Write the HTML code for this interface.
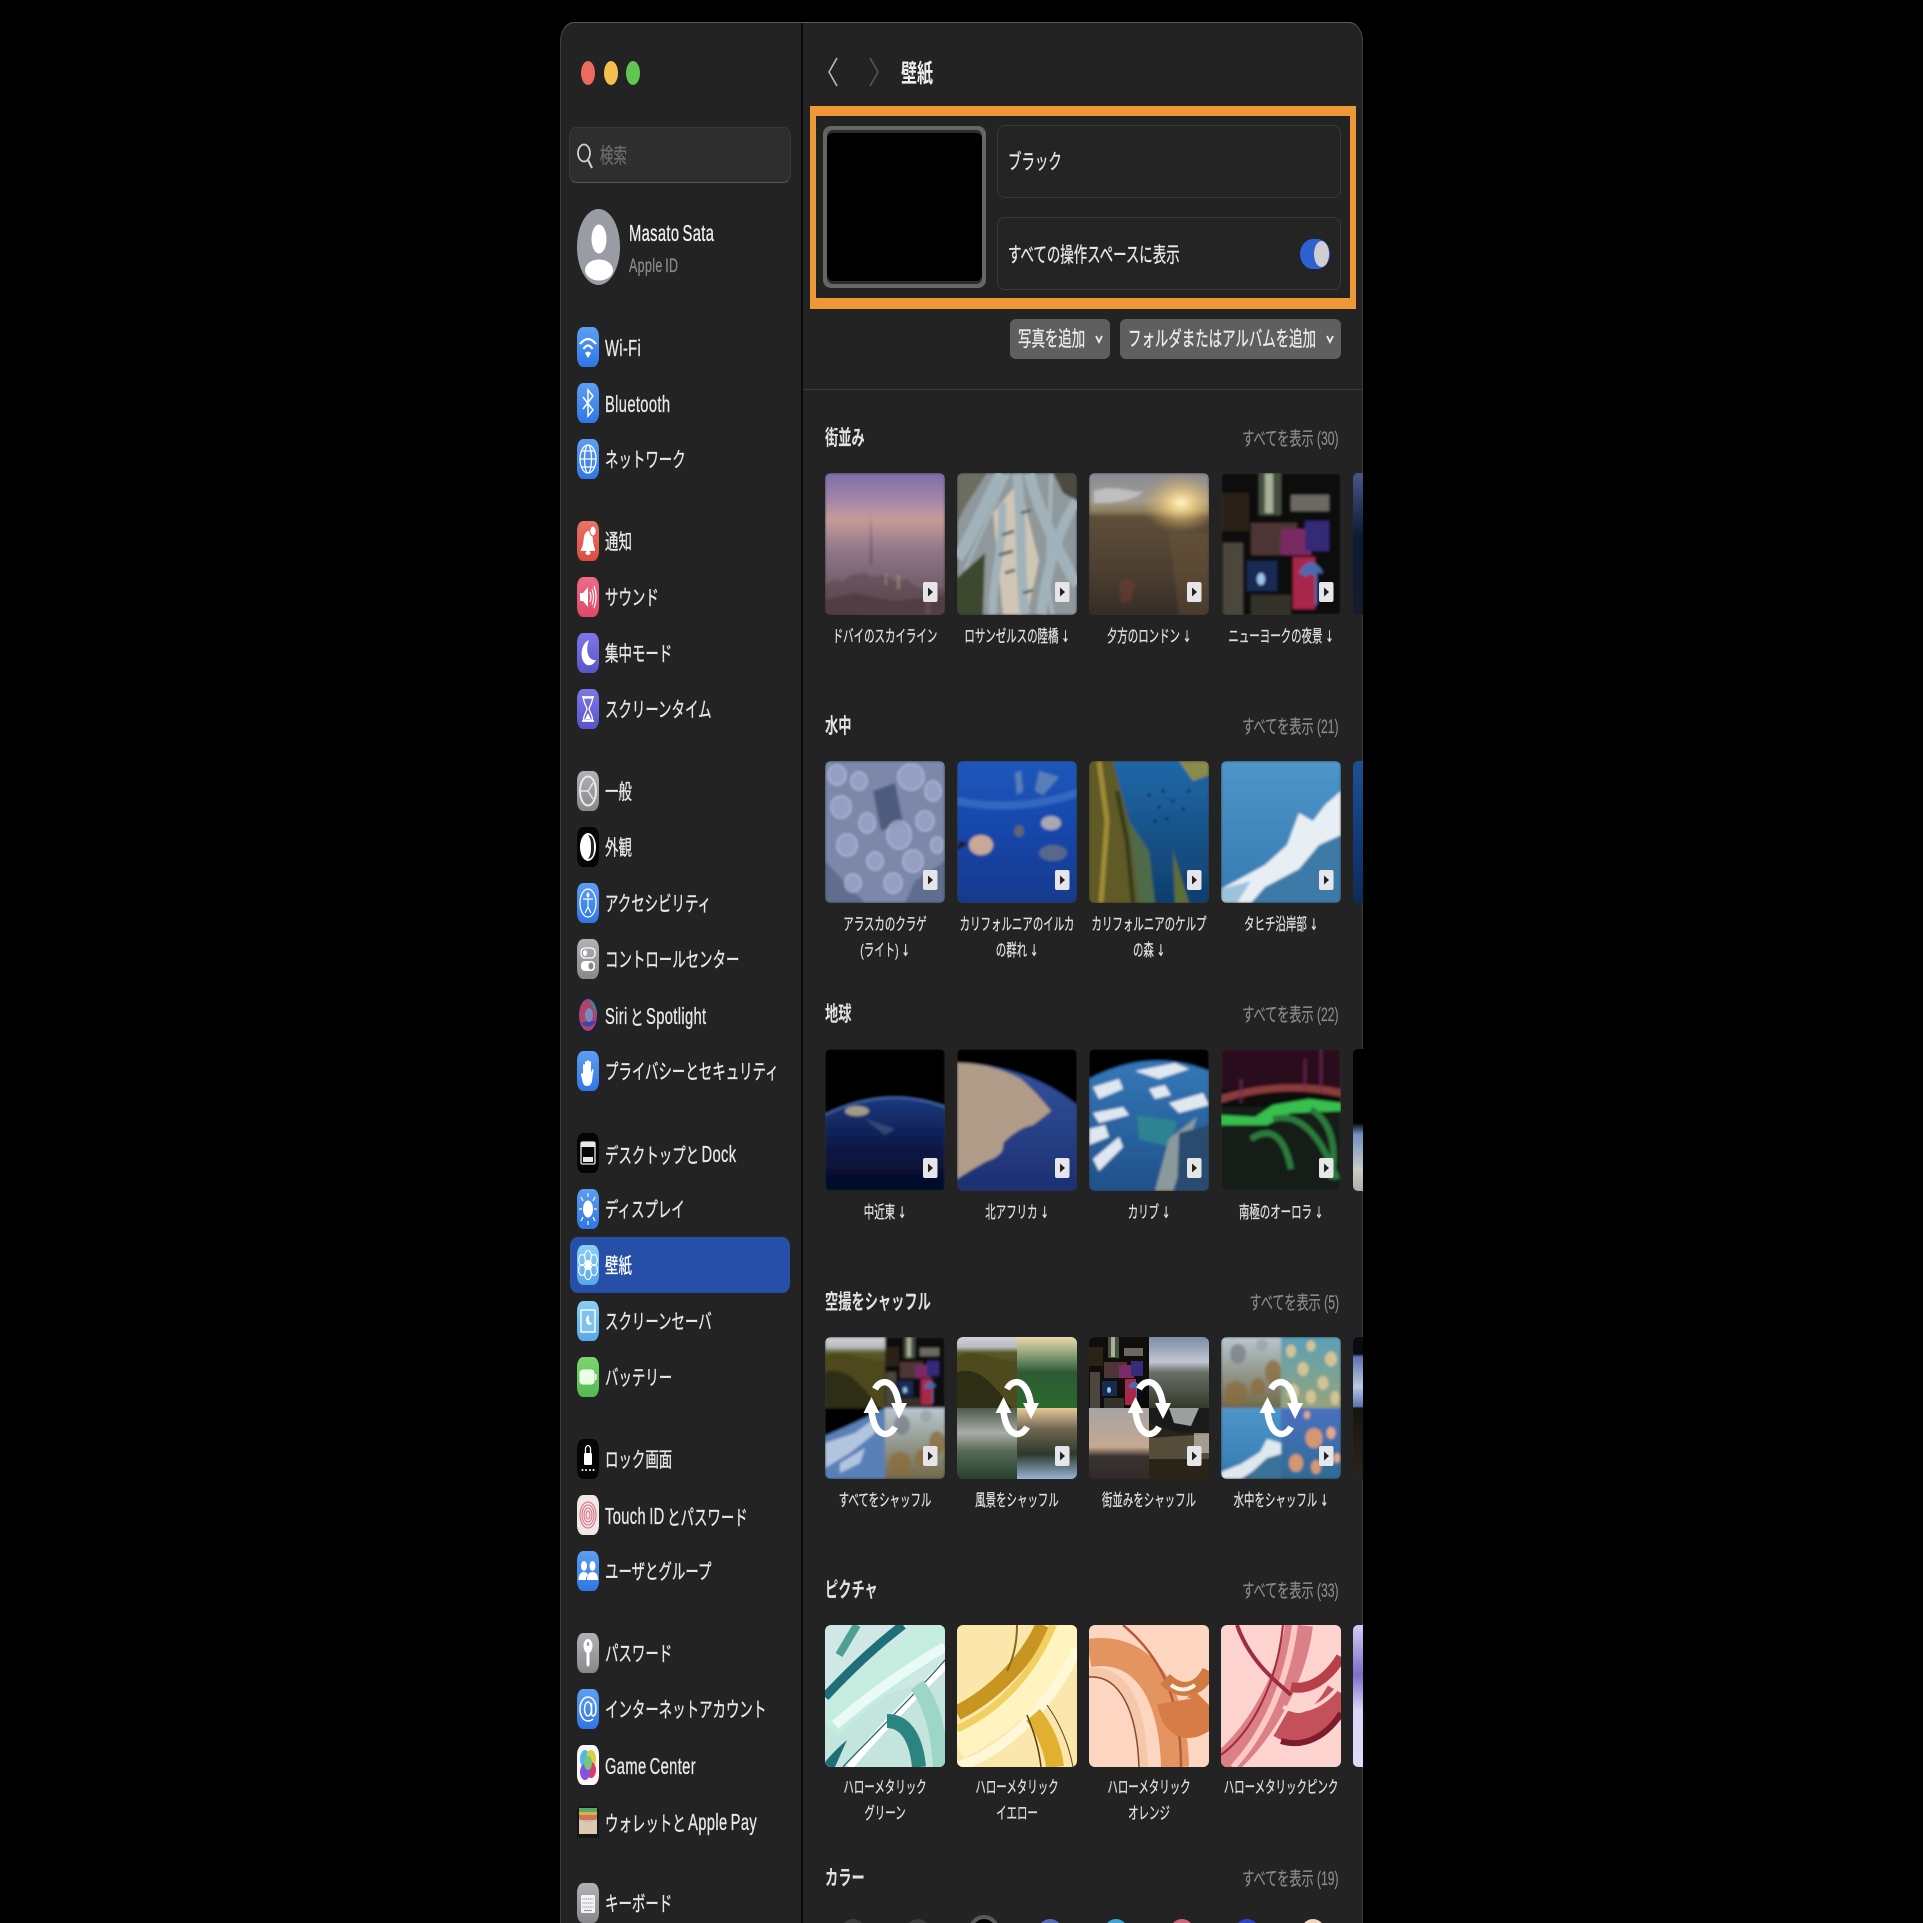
<!DOCTYPE html>
<html lang="ja"><head><meta charset="utf-8"><title>壁紙</title>
<style>
html,body{margin:0;padding:0;background:#000}
#r{position:relative;width:1923px;height:1923px;overflow:hidden;background:#000;font-family:"Liberation Sans","Noto Sans CJK JP",sans-serif;color:#e8e8e8}
#w{position:absolute;left:560px;top:22px;width:803px;height:1920px;background:#232323;border-radius:14px 14px 0 0/20px 20px 0 0;box-shadow:inset 0 1px 0 #5c5c5c,inset 1px 0 0 #3c3c3c,inset -1px 0 0 #3c3c3c}
.a{position:absolute}
.t{position:absolute;white-space:nowrap;font-size:21px;line-height:30px;word-spacing:-2px;transform-origin:0 50%;transform:scaleX(.64);-webkit-text-stroke:.3px currentColor}
.l{font-size:23px;letter-spacing:.55px;position:relative;top:-1px}
.c{position:absolute;white-space:nowrap;font-size:17px;line-height:24px;color:#e0e0e0;transform:translateX(-50%) scaleX(.615);-webkit-text-stroke:.25px currentColor}
.d{font-family:"DejaVu Sans",sans-serif;font-size:16px}
.h{position:absolute;left:825px;white-space:nowrap;font-size:21px;line-height:30px;font-weight:700;color:#e2e2e2;transform-origin:0 50%;transform:scaleX(.63)}
.s{position:absolute;right:584px;white-space:nowrap;font-size:19px;line-height:24px;color:#8a8a8a;transform-origin:100% 50%;transform:scaleX(.64);-webkit-text-stroke:.2px currentColor}
.i{position:absolute;left:577px;width:22px;height:40px}
.th{position:absolute;width:120px;height:142px;border-radius:6px;overflow:hidden;background:#333}
.th svg{display:block;width:120px;height:142px}
.sl{position:absolute;left:1353px;width:10px;height:142px;border-radius:5px 0 0 5px}
.card{position:absolute;left:997px;width:342px;height:71px;border:1px solid #3a3a3a;border-radius:8px;background:#242424}
.btn{position:absolute;top:319px;height:40px;background:#5f5f5f;border-radius:6px}
.dot{position:absolute;top:1919px;width:26px;height:30px;border-radius:50%}
</style></head><body>
<div id="r">
<svg width="0" height="0" style="position:absolute"><defs>
<filter id="bf" x="-5%" y="-5%" width="110%" height="110%"><feGaussianBlur stdDeviation="1.300"/></filter>
<linearGradient id="gb" x2="0" y2="1"><stop offset="0" stop-color="#5d9ff3"/><stop offset="1" stop-color="#2f77e6"/></linearGradient>
<linearGradient id="gr" x2="0" y2="1"><stop offset="0" stop-color="#ea7468"/><stop offset="1" stop-color="#de4c3e"/></linearGradient>
<linearGradient id="gp" x2="0" y2="1"><stop offset="0" stop-color="#ec6c8a"/><stop offset="1" stop-color="#e04868"/></linearGradient>
<linearGradient id="gv" x2="0" y2="1"><stop offset="0" stop-color="#7d78e8"/><stop offset="1" stop-color="#5855cc"/></linearGradient>
<linearGradient id="gg" x2="0" y2="1"><stop offset="0" stop-color="#b2b2b6"/><stop offset="1" stop-color="#88888c"/></linearGradient>
<linearGradient id="gl" x2="0" y2="1"><stop offset="0" stop-color="#8cd0f5"/><stop offset="1" stop-color="#55a8e8"/></linearGradient>
<linearGradient id="gn" x2="0" y2="1"><stop offset="0" stop-color="#7cd672"/><stop offset="1" stop-color="#55b850"/></linearGradient>
<linearGradient id="dub" x2="0" y2="1"><stop offset="0" stop-color="#7a6ea8"/><stop offset=".2" stop-color="#a688a6"/><stop offset=".33" stop-color="#c79a98"/><stop offset=".55" stop-color="#8f7688"/><stop offset=".78" stop-color="#75606c"/><stop offset="1" stop-color="#5a4650"/></linearGradient>
<linearGradient id="lon" x2="0" y2="1"><stop offset="0" stop-color="#8b8b95"/><stop offset=".2" stop-color="#a09a90"/><stop offset=".27" stop-color="#8e7e5c"/><stop offset=".31" stop-color="#5e4e3a"/><stop offset=".7" stop-color="#4c3e30"/><stop offset="1" stop-color="#362c26"/></linearGradient>
<radialGradient id="sun" cx=".5" cy=".5" r=".5"><stop offset="0" stop-color="#fff6c8"/><stop offset=".3" stop-color="#f2d48a" stop-opacity=".85"/><stop offset="1" stop-color="#c9a050" stop-opacity="0"/></radialGradient>
<linearGradient id="dol" x2="0" y2="1"><stop offset="0" stop-color="#1f58bc"/><stop offset=".5" stop-color="#1546aa"/><stop offset="1" stop-color="#123a8c"/></linearGradient>
<linearGradient id="kel" x2="0" y2="1"><stop offset="0" stop-color="#2068a8"/><stop offset="1" stop-color="#0e3e6c"/></linearGradient>
<linearGradient id="tah" x2="0" y2="1"><stop offset="0" stop-color="#4e95c9"/><stop offset="1" stop-color="#347bb0"/></linearGradient>
<linearGradient id="mid" x2="0" y2="1"><stop offset="0" stop-color="#1c3a80"/><stop offset=".5" stop-color="#0b1a4a"/><stop offset="1" stop-color="#040a24"/></linearGradient>
<linearGradient id="afr" x2="0" y2="1"><stop offset="0" stop-color="#33549c"/><stop offset="1" stop-color="#1c2f72"/></linearGradient>
<linearGradient id="car" x2="0" y2="1"><stop offset="0" stop-color="#3478b8"/><stop offset="1" stop-color="#20508a"/></linearGradient>
<linearGradient id="hil" x2="0" y2="1"><stop offset="0" stop-color="#d0d2d6"/><stop offset=".14" stop-color="#b8bcc0"/><stop offset=".22" stop-color="#5a5a28"/><stop offset="1" stop-color="#24240f"/></linearGradient>
<linearGradient id="val" x2="0" y2="1"><stop offset="0" stop-color="#ead8a8"/><stop offset=".25" stop-color="#8aa07a"/><stop offset=".5" stop-color="#2e5a34"/><stop offset="1" stop-color="#2a6a2c"/></linearGradient>
<linearGradient id="fog" x2="0" y2="1"><stop offset="0" stop-color="#4c5a4c"/><stop offset=".35" stop-color="#a8aca8"/><stop offset=".6" stop-color="#5a6a58"/><stop offset="1" stop-color="#24402c"/></linearGradient>
<linearGradient id="riv" x2="0" y2="1"><stop offset="0" stop-color="#e8c898"/><stop offset=".3" stop-color="#6e6652"/><stop offset=".65" stop-color="#2c3a2a"/><stop offset="1" stop-color="#9ab4d8"/></linearGradient>
<linearGradient id="nyc" x2="0" y2="1"><stop offset="0" stop-color="#7e8ca8"/><stop offset=".35" stop-color="#c0c6d0"/><stop offset=".5" stop-color="#6a6e68"/><stop offset="1" stop-color="#323a28"/></linearGradient>
<linearGradient id="dus" x2="0" y2="1"><stop offset="0" stop-color="#a8a4a4"/><stop offset=".55" stop-color="#c4a890"/><stop offset=".68" stop-color="#3a3430"/><stop offset="1" stop-color="#302a2a"/></linearGradient>
<linearGradient id="jyl" x2="0" y2="1"><stop offset="0" stop-color="#b8c8d0"/><stop offset="1" stop-color="#706848"/></linearGradient>
<linearGradient id="jgo" x2="0" y2="1"><stop offset="0" stop-color="#5aa0b8"/><stop offset="1" stop-color="#98a478"/></linearGradient>
<linearGradient id="jbl" x2="0" y2="1"><stop offset="0" stop-color="#4a70c0"/><stop offset="1" stop-color="#2e6c94"/></linearGradient>
<g id="badge"><rect x="98" y="109" width="14.500" height="20" rx="2" fill="#e6e6ea"/><path d="M103 114.500v9l5-4.500z" fill="#222"/></g>
<g id="rf"><g fill="none" stroke="#fff" stroke-width="6.500"><path d="M50 52C56 41 70 41 74 68"/><path d="M70 90C64 101 50 101 46.500 75"/></g><path d="M66 66h16l-8 16zM38.500 76h16l-8-16z" fill="#fff"/></g>
<g id="dubai"><rect width="120" height="142" fill="url(#dub)"/><path d="M46 42l1.500 50h-3z" fill="#6e5874"/><path d="M0 142V112l8-6 10 2 8-6 14-2 6 4 14-2 10 6 12-2 12 10 14-4 12 6v26z" fill="#5c4850" opacity=".6"/><path d="M60 100v12h2v-12zM72 102v14h3v-14zM100 112h6v30h-6z" fill="#a08a78" opacity=".7"/><path d="M0 126l30-6 40 8 50-6v20H0z" fill="#4d3a40" opacity=".75"/></g>
<g id="la"><rect width="120" height="142" fill="#8f989a"/><path d="M36 40L62 8l20 80-12 54H46z" fill="#d0c6b4"/><path d="M0 105L28 80 26 142H0z" fill="#3e4a2e"/><path d="M96 0h24v28l-14-8z" fill="#4e4c40"/><path d="M0 0h30L8 34 0 50z" fill="#6c6e60"/><g fill="none" stroke="#a2b2ba"><path d="M0 85C20 55 30 25 45 0" stroke-width="12"/><path d="M8 96C24 62 38 30 52 0" stroke-width="3"/><path d="M45 30C48 70 34 110 36 142" stroke-width="8"/><path d="M60 0C66 50 62 100 68 142" stroke-width="10"/><path d="M72 0C82 40 102 80 120 112" stroke-width="11"/><path d="M84 142C90 92 104 50 120 28" stroke-width="10"/><path d="M94 0C94 60 86 100 96 142" stroke-width="4"/></g><path d="M45 62l12-4M42 82l14-4M48 100l10-3M64 40l10-3M66 120l10-3" stroke="#5c666a" stroke-width="3"/></g>
<g id="london"><rect width="120" height="142" fill="url(#lon)"/><path d="M5 18C30 10 45 22 55 18 42 30 18 30 5 30z" fill="#c8c8cc" opacity=".8"/><ellipse cx="92" cy="30" rx="40" ry="30" fill="url(#sun)"/><path d="M30 110c8-6 14-4 16 2l-4 16-10 2z" fill="#6a3c32" opacity=".7"/><path d="M80 60L120 60 120 142 90 142z" fill="#7a6040" opacity=".3"/></g>
<g id="ny"><rect width="120" height="142" fill="#100d0c"/><rect x="38" y="0" width="22" height="42" fill="#45503e"/><rect x="44" y="0" width="8" height="40" fill="#a8b098"/><rect x="0" y="20" width="28" height="38" fill="#2c2218"/><rect x="70" y="22" width="38" height="16" fill="#6a6a62"/><rect x="30" y="50" width="46" height="32" fill="#4e3434"/><rect x="60" y="56" width="30" height="26" fill="#7a2a64"/><rect x="84" y="48" width="24" height="30" fill="#342c78"/><rect x="2" y="70" width="20" height="72" fill="#4c463e"/><rect x="26" y="88" width="30" height="30" fill="#162a52"/><ellipse cx="40" cy="106" rx="4" ry="6" fill="#9cc8e8"/><rect x="72" y="84" width="22" height="52" fill="#a82848"/><path d="M78 100c6-14 18-14 24 0v32h-8V104c-2-4-6-4-8 0z" fill="#4a6ab0"/><rect x="96" y="100" width="24" height="42" fill="#0a0a0a"/><rect x="30" y="122" width="40" height="20" fill="#34322a"/></g>
<g id="jelly"><rect width="120" height="142" fill="#7b87aa"/><path d="M48 30l22-8 8 40-22 8z" fill="#3a4868" opacity=".7"/><path d="M0 100l40 42H0zM90 120l30-20v42H80z" fill="#4e5c7c" opacity=".6"/><g fill="#9ca5ca" stroke="#c4cae4" stroke-width="1.300" opacity=".8"><ellipse cx="12" cy="14" rx="9" ry="10"/><ellipse cx="34" cy="20" rx="8" ry="9"/><ellipse cx="86" cy="16" rx="13" ry="13"/><ellipse cx="108" cy="30" rx="8" ry="10"/><ellipse cx="16" cy="46" rx="10" ry="11"/><ellipse cx="42" cy="62" rx="8" ry="10"/><ellipse cx="74" cy="74" rx="12" ry="14"/><ellipse cx="100" cy="60" rx="9" ry="10"/><ellipse cx="22" cy="84" rx="10" ry="11"/><ellipse cx="50" cy="100" rx="8" ry="9"/><ellipse cx="88" cy="100" rx="10" ry="11"/><ellipse cx="68" cy="122" rx="9" ry="10"/><ellipse cx="28" cy="122" rx="8" ry="9"/><ellipse cx="112" cy="84" rx="6" ry="8"/></g></g>
<g id="dolphin"><rect width="120" height="142" fill="url(#dol)"/><path d="M58 12l6-2 2 20-6 4zM82 10l20 6-16 18-8-4z" fill="#8aa4b8" opacity=".55"/><path d="M0 36Q60 48 120 28v8Q60 56 0 44z" fill="#5a90d8" opacity=".4"/><ellipse cx="24" cy="84" rx="12" ry="10" fill="#c8a898"/><path d="M12 82L0 90l2-10z" fill="#1a1a24"/><ellipse cx="62" cy="70" rx="5" ry="6" fill="#5c6670"/><ellipse cx="94" cy="62" rx="10" ry="7" fill="#a8a8b4"/><ellipse cx="96" cy="92" rx="14" ry="8" fill="#59688a"/></g>
<g id="kelp"><rect width="120" height="142" fill="url(#kel)"/><path d="M0 0H24L40 60 54 142H0z" fill="#5e5a26"/><path d="M10 0l8 60-6 82" stroke="#a08c38" stroke-width="5" fill="none"/><path d="M28 30l10 50 6 62" stroke="#2e3a1e" stroke-width="4" fill="none"/><path d="M40 60l20 30 6 52H50z" fill="#4f6a48"/><path d="M84 90l16 52H86z" fill="#5e6e30"/><path d="M90 0h30v14l-16 6z" fill="#8a8a48"/><g fill="#0c1a2c"><circle cx="60" cy="34" r="1.500"/><circle cx="74" cy="30" r="1.500"/><circle cx="84" cy="40" r="1.500"/><circle cx="70" cy="46" r="1.500"/><circle cx="94" cy="48" r="1.500"/><circle cx="78" cy="58" r="1.500"/><circle cx="100" cy="30" r="1.500"/><circle cx="66" cy="60" r="1.500"/></g></g>
<g id="tahiti"><rect width="120" height="142" fill="url(#tah)"/><path d="M120 30L104 44 92 60 78 52 66 84 44 104 0 128v14h120z" fill="#e8eff4"/><path d="M120 74L98 84 78 108 44 126 30 142h90z" fill="#3d7aa8"/><path d="M0 128l30-8-14 22H0z" fill="#9cc2dc"/></g>
<g id="mideast"><rect width="120" height="142" fill="#000"/><path d="M0 66Q60 36 120 58V142H0z" fill="url(#mid)"/><path d="M0 66Q60 36 120 58" fill="none" stroke="#5a82c8" stroke-width="1.200"/><ellipse cx="32" cy="62" rx="12" ry="5" fill="#c4b68a" opacity=".8"/><path d="M40 70l30 10-10 6z" fill="#6a7c98" opacity=".4"/></g>
<g id="africa"><rect width="120" height="142" fill="#000"/><path d="M0 14Q70 16 120 56V142H0z" fill="url(#afr)"/><path d="M0 14Q34 14 64 30 80 44 94 62 84 70 76 76 62 78 46 94 48 106 30 112 12 122 0 130z" fill="#b09c88"/></g>
<g id="carib"><rect width="120" height="142" fill="#000"/><path d="M0 30Q60 -2 120 22V142H0z" fill="url(#car)"/><g fill="#dfe8f0"><path d="M4 38l26-8 4 10-24 10zM4 64l30-6 6 8-30 8zM46 22l40-8 14 6-30 10zM80 54l34-10 6 12-30 8zM4 110l26-22 4 10-24 24zM0 80l16-4 4 12-20 8zM60 40l16-4 6 10-16 4z"/></g><path d="M48 66l40 6-6 26-32-8z" fill="#2e8a90" opacity=".85"/><path d="M80 90l28-22-10 30-14 44H66z" fill="#8a9a9c"/><path d="M90 84l30-8v66H88z" fill="#2c4c70"/></g>
<g id="earth"><rect width="120" height="142" fill="#000"/><path d="M0 56Q60 30 120 0V142H0z" fill="#5a80b8"/><path d="M0 70l60-20 40-30v30L50 90 0 120zM30 110l50-30-10 30-40 20z" fill="#c8d6e8" opacity=".8"/></g>
<g id="aurora"><rect width="120" height="142" fill="#0d0a0c"/><rect width="120" height="40" fill="#2a0a1c"/><path d="M0 46Q60 28 120 40v8Q60 34 0 54z" fill="#8a3a3a"/><rect width="120" height="84" y="58" fill="#141e14"/><path d="M0 66l34 2 18-12 36-6 32 4v8l-50 2-24 12-46 0z" fill="#38c050"/><path d="M52 70Q90 60 116 130M90 60Q120 80 110 130M30 90Q60 70 70 120" fill="none" stroke="#2c7a3c" stroke-width="6"/><path d="M100 0v44M20 30v24M84 10v30" stroke="#70305a" stroke-width="3" opacity=".6"/></g>
<g id="hills"><rect width="120" height="142" fill="url(#hil)"/><path d="M0 40C30 22 60 40 120 50L120 142H0z" fill="#4e4a1e"/><path d="M0 70C40 60 60 80 110 142H0z" fill="#2e2e14"/></g>
<g id="night"><rect width="120" height="142" fill="#2a2418"/><path d="M0 0H120V50L60 50 0 30z" fill="#1a1a18"/><path d="M40 0h60L84 36 50 30z" fill="#9aa0a0"/><path d="M0 60l120-8v50H0z" fill="#554c3a"/><path d="M90 50h30v40H90z" fill="#d8d4c8" opacity=".6"/></g>
<g id="jyel"><rect width="120" height="142" fill="url(#jyl)"/><g fill="#8c6c3c" opacity=".75"><ellipse cx="34" cy="34" rx="16" ry="20" fill="#7a7e8a"/><ellipse cx="82" cy="16" rx="12" ry="12" fill="#9aa0aa"/><ellipse cx="104" cy="70" rx="16" ry="24"/><ellipse cx="30" cy="112" rx="22" ry="24"/><ellipse cx="74" cy="100" rx="14" ry="18"/></g></g>
<g id="jgol"><rect width="120" height="142" fill="url(#jgo)"/><g fill="#d0c494"><ellipse cx="20" cy="28" rx="10" ry="13"/><ellipse cx="60" cy="18" rx="9" ry="11"/><ellipse cx="100" cy="44" rx="12" ry="15"/><ellipse cx="44" cy="64" rx="11" ry="14"/><ellipse cx="84" cy="92" rx="11" ry="14"/><ellipse cx="24" cy="110" rx="12" ry="16"/><ellipse cx="60" cy="120" rx="10" ry="14"/><ellipse cx="108" cy="122" rx="9" ry="14"/></g></g>
<g id="jblu"><rect width="120" height="142" fill="url(#jbl)"/><g fill="#d49870"><ellipse cx="66" cy="60" rx="17" ry="20"/><ellipse cx="30" cy="110" rx="14" ry="18"/><ellipse cx="70" cy="118" rx="10" ry="14"/></g><g fill="#e4a888"><ellipse cx="100" cy="50" rx="9" ry="12"/><ellipse cx="112" cy="100" rx="7" ry="10"/><ellipse cx="52" cy="14" rx="6" ry="8"/></g></g>
<g id="wave"><rect width="120" height="142" fill="url(#tah)"/><path d="M120 70L92 62 78 88 40 112 0 128v14h120z" fill="#dfe8ee"/><path d="M120 92L92 100 64 126 40 142h80z" fill="#3a7298"/></g>
<g id="mint"><rect width="120" height="142" fill="#cfe8e6"/><path d="M0 142V96L60 70 120 50V142z" fill="#c4e4de"/><g fill="none"><path d="M0 98C30 70 70 40 120 6" stroke="#c4ecdf" stroke-width="36"/><path d="M10 100C40 74 78 46 120 22" stroke="#eafaf6" stroke-width="10"/><path d="M0 72C26 44 52 20 78 0" stroke="#1f6f78" stroke-width="9"/><path d="M14 30L32 0" stroke="#4d9e94" stroke-width="8"/><path d="M24 142C50 110 90 70 120 40" stroke="#fff" stroke-width="8"/><path d="M18 142C46 112 86 74 120 35" stroke="#2a6a68" stroke-width="1.300"/><path d="M62 96C84 96 92 120 94 142" stroke="#2c8480" stroke-width="14"/><path d="M92 60C108 80 114 110 116 142" stroke="#9ed6c6" stroke-width="16"/></g><path d="M0 137Q10 125 22 115L10 142H0z" fill="#1f6f78"/></g>
<g id="yel"><rect width="120" height="142" fill="#fbe6ac"/><g fill="none"><path d="M0 120C40 100 90 60 118 0" stroke="#fff3c0" stroke-width="30"/><path d="M0 88C36 70 70 36 86 0" stroke="#c89620" stroke-width="15"/><path d="M0 104C40 86 76 50 96 0" stroke="#f0d060" stroke-width="7"/><path d="M0 142C50 126 94 80 120 24" stroke="#fff8d8" stroke-width="10"/><path d="M76 90C88 104 96 124 98 142" stroke="#e0b030" stroke-width="18"/><path d="M70 90C78 110 82 124 84 142" stroke="#5a3c10" stroke-width="1.500"/><path d="M90 80C104 100 112 120 116 142" stroke="#5a4010" stroke-width="1"/><path d="M60 0C60 20 56 34 50 46" stroke="#8a6a18" stroke-width="2"/></g></g>
<g id="ora"><rect width="120" height="142" fill="#fcd6c0"/><g fill="none"><path d="M0 28C50 20 84 60 86 142" stroke="#e4945e" stroke-width="28"/><path d="M0 48C36 44 52 82 54 142" stroke="#f4c8a8" stroke-width="10"/><path d="M0 52C30 50 48 84 50 142" stroke="#8a4a30" stroke-width="1.500"/><path d="M34 0C70 30 92 70 92 142" stroke="#b45c3c" stroke-width="2.500"/><path d="M120 46C110 66 92 70 76 54" stroke="#d07a44" stroke-width="14"/><path d="M88 76C92 100 104 96 120 80" stroke="#d67c46" stroke-width="40"/><path d="M82 60C90 66 98 66 106 60" stroke="#fff2e4" stroke-width="4"/></g></g>
<g id="pin"><rect width="120" height="142" fill="#fcd3cf"/><g fill="none"><path d="M0 142C40 110 72 50 78 0" stroke="#dc8088" stroke-width="28"/><path d="M12 142C42 110 66 60 74 0" stroke="#fbc8c4" stroke-width="6"/><path d="M0 130C30 108 56 60 62 0" stroke="#a02c3c" stroke-width="2"/><path d="M16 0C30 40 60 60 70 70" stroke="#a02c44" stroke-width="4"/><path d="M70 62C90 66 108 52 120 32" stroke="#b8404a" stroke-width="10"/><path d="M60 98C84 112 104 96 120 68" stroke="#c4505a" stroke-width="30"/><path d="M62 82C86 92 108 76 120 58" stroke="#fcd3cf" stroke-width="4"/><path d="M60 116C86 124 108 108 120 88" stroke="#7c1c2c" stroke-width="6"/></g></g>
</defs></svg>

<div id="w"></div>
<div class="a" style="left:801px;top:23px;width:2px;height:1900px;background:#0c0c0c"></div>
<div class="a" style="left:803px;top:389px;width:559px;height:1px;background:#3c3c3c"></div>

<!-- traffic lights -->
<div class="a" style="left:581px;top:61px;width:14px;height:24px;border-radius:50%;background:#ec6a5e"></div>
<div class="a" style="left:604px;top:61px;width:14px;height:24px;border-radius:50%;background:#f4bf4f"></div>
<div class="a" style="left:626px;top:61px;width:14px;height:24px;border-radius:50%;background:#61c554"></div>

<!-- search -->
<div class="a" style="left:569px;top:127px;width:220px;height:54px;background:#2e2e2e;border:1px solid #3a3a3a;border-bottom-color:#555;border-radius:7px/10px"></div>
<svg class="a" style="left:576px;top:143px" width="18" height="27" viewBox="0 0 18 27"><ellipse cx="8" cy="10" rx="6" ry="8.500" fill="none" stroke="#d0d0d0" stroke-width="1.800"/><path d="M12 17l4 8" stroke="#d0d0d0" stroke-width="2"/></svg>
<div class="t" style="left:600px;top:142px;color:#6c6c6c">検索</div>

<!-- avatar -->
<svg class="a" style="left:577px;top:209px" width="43" height="76" viewBox="0 0 43 76"><defs><clipPath id="ac"><ellipse cx="21.500" cy="38" rx="21.500" ry="38"/></clipPath></defs><ellipse cx="21.500" cy="38" rx="21.500" ry="38" fill="#9a9ca4"/><g clip-path="url(#ac)"><ellipse cx="22" cy="30" rx="7.500" ry="14.500" fill="#fff"/><ellipse cx="22" cy="61" rx="14" ry="10.500" fill="#fff"/></g></svg>
<div class="t" style="left:629px;top:219px;color:#f0f0f0"><span class="l">Masato Sata</span></div>
<div class="t" style="left:629px;top:251px;color:#8a8a8a"><span class="l" style="font-size:19.500px;top:0">Apple ID</span></div>

<!-- selection -->
<div class="a" style="left:570px;top:1237px;width:220px;height:56px;background:#2650a8;border-radius:7px/10px"></div>

<!-- sidebar icons -->
<svg class="i" style="top:327px" viewBox="0 0 22 40"><rect width="22" height="40" rx="6" ry="10" fill="url(#gb)"/><g fill="none" stroke="#fff" stroke-width="2.200"><path d="M3 17Q11 7 19 17"/><path d="M6.500 22Q11 15 15.500 22"/></g><path d="M11 31l-3-5q3-3 6 0z" fill="#fff"/></svg>
<svg class="i" style="top:383px" viewBox="0 0 22 40"><rect width="22" height="40" rx="6" ry="10" fill="url(#gb)"/><path d="M6 14l10 13-5 6V7l5 6-10 13" fill="none" stroke="#fff" stroke-width="1.500"/></svg>
<svg class="i" style="top:439px" viewBox="0 0 22 40"><rect width="22" height="40" rx="6" ry="10" fill="url(#gb)"/><g fill="none" stroke="#fff" stroke-width="1.300"><ellipse cx="11" cy="20" rx="8" ry="14"/><ellipse cx="11" cy="20" rx="3.500" ry="14"/><path d="M3 20h16M4 12h14M4 28h14"/></g></svg>
<svg class="i" style="top:521px" viewBox="0 0 22 40"><rect width="22" height="40" rx="6" ry="10" fill="url(#gr)"/><path d="M4 28c2-2 2-6 3-12s6-8 8-4c1 6 1 12 3 16z" fill="#fff"/><rect x="4" y="28" width="14" height="2" fill="#fff"/><ellipse cx="11" cy="32" rx="2.500" ry="2" fill="#fff"/><ellipse cx="16" cy="10" rx="3.200" ry="5" fill="#fff" stroke="#de5c50"/></svg>
<svg class="i" style="top:577px" viewBox="0 0 22 40"><rect width="22" height="40" rx="6" ry="10" fill="url(#gp)"/><path d="M3 16h3l5-6v20l-5-6H3z" fill="#fff"/><g fill="none" stroke="#fff" stroke-width="1.100"><path d="M13 15q2 5 0 10M15 12q3 8 0 16M17 9q4 11 0 22"/></g></svg>
<svg class="i" style="top:633px" viewBox="0 0 22 40"><rect width="22" height="40" rx="6" ry="10" fill="url(#gv)"/><path d="M12 7C3 11 2 28 10 32c4 1 7-1 9-5-8 1-11-10-7-20z" fill="#fff"/></svg>
<svg class="i" style="top:689px" viewBox="0 0 22 40"><rect width="22" height="40" rx="6" ry="10" fill="url(#gv)"/><path d="M5 8h12M5 32h12" stroke="#fff" stroke-width="1.800"/><path d="M6.500 9h9c0 5-3 8-3.500 11 .5 3 3.500 6 3.500 11h-9c0-5 3-8 3.500-11-.5-3-3.500-6-3.500-11z" fill="none" stroke="#fff" stroke-width="1.300"/><path d="M8 30l3-6 3 6z" fill="#fff"/></svg>
<svg class="i" style="top:771px" viewBox="0 0 22 40"><rect width="22" height="40" rx="6" ry="10" fill="url(#gg)"/><ellipse cx="11" cy="20" rx="8" ry="14.500" fill="none" stroke="#e8e8e8" stroke-width="2"/><path d="M11 20L4 20M11 20l5-8M11 20l5 8" stroke="#e8e8e8" stroke-width="1.400"/></svg>
<svg class="i" style="top:827px" viewBox="0 0 22 40"><rect width="22" height="40" rx="6" ry="10" fill="#050505"/><ellipse cx="11" cy="20" rx="8" ry="14" fill="#fff"/><path d="M11 8c6 1 6 8 6 12s0 11-6 12c3-4 3-8 3-12s0-8-3-12z" fill="#222"/></svg>
<svg class="i" style="top:883px" viewBox="0 0 22 40"><rect width="22" height="40" rx="6" ry="10" fill="url(#gb)"/><ellipse cx="11" cy="20" rx="8" ry="14" fill="none" stroke="#fff" stroke-width="1.200"/><ellipse cx="11" cy="12" rx="1.500" ry="2.500" fill="#fff"/><path d="M6 16h10M11 16v8M11 24l-3 6M11 24l3 6" stroke="#fff" stroke-width="1.200" fill="none"/></svg>
<svg class="i" style="top:939px" viewBox="0 0 22 40"><rect width="22" height="40" rx="6" ry="10" fill="url(#gg)"/><rect x="4" y="9" width="14" height="10" rx="4" fill="none" stroke="#fff" stroke-width="1.300"/><rect x="4" y="22" width="14" height="10" rx="4" fill="#fff"/><ellipse cx="8" cy="14" rx="2" ry="3" fill="#fff"/><ellipse cx="14" cy="27" rx="2.500" ry="3.500" fill="#888"/></svg>
<svg class="i" style="top:995px" viewBox="0 0 22 40"><ellipse cx="11" cy="20" rx="11" ry="20" fill="#1c2238"/><ellipse cx="11" cy="20" rx="9" ry="16" fill="#b0426c"/><path d="M11 4c7 2 9 10 9 16-3-6-5-10-9-16z" fill="#3a8a88"/><path d="M4 28c3 4 10 6 15-2-4 0-9 0-15 2z" fill="#3248b0"/><ellipse cx="12" cy="20" rx="4" ry="7" fill="#7a8ac0"/></svg>
<svg class="i" style="top:1051px" viewBox="0 0 22 40"><rect width="22" height="40" rx="6" ry="10" fill="url(#gb)"/><path d="M6 22V14q1-2 2 0v6-9q1-2 2 0v9-10q1-2 2 0v10-9q1-2 2 0v11q1-4 2-4 1 1 0 4l-1 8q-1 5-5 5-3 0-4-3l-2-8q0-2 2-2z" fill="#fff"/></svg>
<svg class="i" style="top:1133px" viewBox="0 0 22 40"><rect width="22" height="40" rx="6" ry="10" fill="#050505"/><rect x="4" y="9" width="14" height="22" rx="1.500" fill="none" stroke="#e8e8e8" stroke-width="1.300"/><rect x="4" y="9" width="14" height="5" fill="#e8e8e8"/><rect x="6" y="24" width="10" height="5" fill="#e8e8e8"/></svg>
<svg class="i" style="top:1189px" viewBox="0 0 22 40"><rect width="22" height="40" rx="6" ry="10" fill="url(#gb)"/><ellipse cx="11" cy="20" rx="5" ry="8.500" fill="#fff"/><path d="M11 4v4M11 32v4M2 20h3M17 20h3M4 8l2 4M18 8l-2 4M4 32l2-4M18 32l-2-4" stroke="#fff" stroke-width="1.200"/></svg>
<svg class="i" style="top:1245px" viewBox="0 0 22 40"><rect width="22" height="40" rx="6" ry="10" fill="url(#gl)"/><g fill="none" stroke="#fff" stroke-width="1.100"><ellipse cx="11" cy="11" rx="3.300" ry="5.500"/><ellipse cx="11" cy="29" rx="3.300" ry="5.500"/><ellipse cx="5" cy="15" rx="3.300" ry="5.500"/><ellipse cx="17" cy="15" rx="3.300" ry="5.500"/><ellipse cx="5" cy="25" rx="3.300" ry="5.500"/><ellipse cx="17" cy="25" rx="3.300" ry="5.500"/></g><ellipse cx="11" cy="20" rx="3" ry="5" fill="#fff"/></svg>
<svg class="i" style="top:1301px" viewBox="0 0 22 40"><rect width="22" height="40" rx="6" ry="10" fill="url(#gl)"/><rect x="4" y="9" width="14" height="22" fill="#7fc3ea" stroke="#fff" stroke-width="1.400"/><path d="M12 14c-4 1-4 9 0 10 1 0 3-1 3-2-3 0-4-4-3-8z" fill="#fff"/></svg>
<svg class="i" style="top:1357px" viewBox="0 0 22 40"><rect width="22" height="40" rx="6" ry="10" fill="url(#gn)"/><rect x="3" y="13" width="14" height="14" rx="3" fill="#e8ffe4" stroke="#fff"/><rect x="18" y="17" width="1.500" height="6" fill="#fff"/></svg>
<svg class="i" style="top:1439px" viewBox="0 0 22 40"><rect width="22" height="40" rx="6" ry="10" fill="#050505"/><rect x="7" y="14" width="8" height="12" rx="1" fill="#fff"/><path d="M8.500 14V9q2.500-5 5 0v5" fill="none" stroke="#fff" stroke-width="1.300"/><g fill="#fff"><circle cx="5.500" cy="31" r="1"/><circle cx="9" cy="31" r="1"/><circle cx="13" cy="31" r="1"/><circle cx="16.500" cy="31" r="1"/></g></svg>
<svg class="i" style="top:1495px" viewBox="0 0 22 40"><rect width="22" height="40" rx="6" ry="10" fill="#efe8e6"/><g fill="none" stroke="#e0687e" stroke-width="1"><ellipse cx="11" cy="20" rx="8" ry="13"/><ellipse cx="11" cy="20" rx="6" ry="10"/><ellipse cx="11" cy="20" rx="4" ry="7"/><ellipse cx="11" cy="20" rx="2" ry="4"/></g></svg>
<svg class="i" style="top:1551px" viewBox="0 0 22 40"><rect width="22" height="40" rx="6" ry="10" fill="url(#gb)"/><g fill="#fff"><ellipse cx="7" cy="15" rx="3" ry="5"/><ellipse cx="15.500" cy="15" rx="3" ry="5"/><path d="M1.500 29q0-8 5.500-8 3 0 4 3-2 1-2 5zM10 29q0-8 5.500-8t5.500 8z"/></g></svg>
<svg class="i" style="top:1633px" viewBox="0 0 22 40"><rect width="22" height="40" rx="6" ry="10" fill="url(#gg)"/><ellipse cx="11" cy="13" rx="4.500" ry="7" fill="#fff"/><path d="M9.500 18h3v14l-1.500 2-1.500-2z" fill="#fff"/><ellipse cx="11" cy="11" rx="1.200" ry="2" fill="#999"/></svg>
<svg class="i" style="top:1689px" viewBox="0 0 22 40"><rect width="22" height="40" rx="6" ry="10" fill="url(#gb)"/><g fill="none" stroke="#fff" stroke-width="1.500"><ellipse cx="11" cy="20" rx="3.500" ry="7"/><path d="M14.500 14v10q0 3 2 3 2.500-1 2.500-7c0-8-4-12-8-12-5 0-8 6-8 12s3 12 8 12q3 0 5-2"/></g></svg>
<svg class="i" style="top:1745px" viewBox="0 0 22 40"><rect width="22" height="40" rx="6" ry="10" fill="#f8f8f8"/><ellipse cx="8" cy="14" rx="5" ry="9" fill="#52b8e8"/><ellipse cx="14" cy="14" rx="5" ry="9" fill="#d8d040"/><ellipse cx="14" cy="25" rx="5" ry="8" fill="#e03868"/><ellipse cx="8" cy="27" rx="5" ry="8" fill="#8850e0"/><ellipse cx="11" cy="18" rx="4" ry="7" fill="#70c880"/></svg>
<svg class="i" style="top:1801px" viewBox="0 0 22 40"><rect x="0" y="5" width="22" height="32" rx="3" fill="#161616"/><rect x="2" y="7" width="18" height="26" rx="2" fill="#c8b8a0"/><rect x="2" y="7" width="18" height="5" fill="#58a868"/><rect x="2" y="11" width="18" height="4" fill="#d8b048"/><rect x="2" y="14" width="18" height="5" fill="#c87858"/><path d="M2 18q9 6 18 0v15H2z" fill="#dcc8b0"/></svg>
<svg class="i" style="top:1883px" viewBox="0 0 22 40"><rect width="22" height="40" rx="6" ry="10" fill="url(#gg)"/><rect x="4" y="12" width="14" height="18" rx="1.500" fill="#f4f4f4"/><path d="M5.500 16h11M5.500 20h11M5.500 24h11" stroke="#999" stroke-width="1.200" stroke-dasharray="1 .8"/><path d="M7 27.500h8" stroke="#999" stroke-width="1.200"/></svg>

<!-- sidebar labels -->
<div class="t" style="left:605px;top:334px"><span class="l">Wi-Fi</span></div>
<div class="t" style="left:605px;top:390px"><span class="l">Bluetooth</span></div>
<div class="t" style="left:605px;top:446px">ネットワーク</div>
<div class="t" style="left:605px;top:528px">通知</div>
<div class="t" style="left:605px;top:584px">サウンド</div>
<div class="t" style="left:605px;top:640px">集中モード</div>
<div class="t" style="left:605px;top:696px">スクリーンタイム</div>
<div class="t" style="left:605px;top:778px">一般</div>
<div class="t" style="left:605px;top:834px">外観</div>
<div class="t" style="left:605px;top:890px">アクセシビリティ</div>
<div class="t" style="left:605px;top:946px">コントロールセンター</div>
<div class="t" style="left:605px;top:1002px"><span class="l">Siri</span> と <span class="l">Spotlight</span></div>
<div class="t" style="left:605px;top:1058px">プライバシーとセキュリティ</div>
<div class="t" style="left:605px;top:1140px">デスクトップと <span class="l">Dock</span></div>
<div class="t" style="left:605px;top:1196px">ディスプレイ</div>
<div class="t" style="left:605px;top:1252px;color:#fff">壁紙</div>
<div class="t" style="left:605px;top:1308px">スクリーンセーバ</div>
<div class="t" style="left:605px;top:1364px">バッテリー</div>
<div class="t" style="left:605px;top:1446px">ロック画面</div>
<div class="t" style="left:605px;top:1502px"><span class="l">Touch ID</span> とパスワード</div>
<div class="t" style="left:605px;top:1558px">ユーザとグループ</div>
<div class="t" style="left:605px;top:1640px">パスワード</div>
<div class="t" style="left:605px;top:1696px">インターネットアカウント</div>
<div class="t" style="left:605px;top:1752px"><span class="l">Game Center</span></div>
<div class="t" style="left:605px;top:1808px">ウォレットと <span class="l">Apple Pay</span></div>
<div class="t" style="left:605px;top:1890px">キーボード</div>

<!-- header -->
<svg class="a" style="left:826px;top:56px" width="14" height="32" viewBox="0 0 14 32"><path d="M11 2L3 16l8 14" fill="none" stroke="#c0c0c0" stroke-width="1.500"/></svg>
<svg class="a" style="left:867px;top:56px" width="14" height="32" viewBox="0 0 14 32"><path d="M3 2l8 14-8 14" fill="none" stroke="#565656" stroke-width="1.500"/></svg>
<div class="t" style="left:901px;top:59px;font-size:25px;font-weight:700;color:#ececec;-webkit-text-stroke:0">壁紙</div>

<!-- orange box -->
<div class="a" style="left:810px;top:106px;width:546px;height:203px;box-sizing:border-box;border:solid #ee9737;border-width:10px 6px 11px;background:#232323"></div>
<div class="a" style="left:823px;top:126px;width:163px;height:162px;box-sizing:border-box;border-radius:8px;background:#666"></div>
<div class="a" style="left:827px;top:130px;width:155px;height:154px;box-sizing:border-box;border-radius:6px;background:#2c2c2c"></div>
<div class="a" style="left:827px;top:133px;width:155px;height:148px;border-radius:6px;background:#000"></div>
<div class="card" style="top:125px"></div>
<div class="card" style="top:217px"></div>
<div class="t" style="left:1008px;top:148px">ブラック</div>
<div class="t" style="left:1008px;top:241px">すべての操作スペースに表示</div>
<div class="a" style="left:1300px;top:239px;width:30px;height:30px;border-radius:13px/15px;background:#2e61d2"></div>
<div class="a" style="left:1314px;top:241px;width:15px;height:26px;border-radius:50%;background:#cfcfd2"></div>

<!-- buttons -->
<div class="btn" style="left:1010px;width:100px"></div>
<div class="btn" style="left:1120px;width:221px"></div>
<div class="t" style="left:1018px;top:325px;color:#ececec">写真を追加</div>
<div class="t" style="left:1128px;top:325px;color:#ececec">フォルダまたはアルバムを追加</div>
<svg class="a" style="left:1095px;top:334px" width="8" height="10" viewBox="0 0 8 10"><path d="M1 2l3 6 3-6" fill="none" stroke="#eee" stroke-width="1.800"/></svg>
<svg class="a" style="left:1326px;top:334px" width="8" height="10" viewBox="0 0 8 10"><path d="M1 2l3 6 3-6" fill="none" stroke="#eee" stroke-width="1.800"/></svg>

<!-- section 1 -->
<div class="h" style="top:424px">街並み</div><div class="s" style="top:428px">すべてを表示 (30)</div>
<div class="th" style="left:825px;top:473px"><svg viewBox="0 0 120 142"><use filter="url(#bf)" href="#dubai"/><use href="#badge"/></svg></div>
<div class="th" style="left:957px;top:473px"><svg viewBox="0 0 120 142"><use filter="url(#bf)" href="#la"/><use href="#badge"/></svg></div>
<div class="th" style="left:1089px;top:473px"><svg viewBox="0 0 120 142"><use filter="url(#bf)" href="#london"/><use href="#badge"/></svg></div>
<div class="th" style="left:1221px;top:473px"><svg viewBox="0 0 120 142"><use filter="url(#bf)" href="#ny"/><use href="#badge"/></svg></div>
<div class="sl" style="top:473px;background:linear-gradient(#4a5488,#0c1a34 45%,#141c2c)"></div>
<div class="c" style="left:885px;top:625px">ドバイのスカイライン</div>
<div class="c" style="left:1017px;top:625px">ロサンゼルスの陸橋 <span class="d">↓</span></div>
<div class="c" style="left:1149px;top:625px">夕方のロンドン <span class="d">↓</span></div>
<div class="c" style="left:1281px;top:625px">ニューヨークの夜景 <span class="d">↓</span></div>

<!-- section 2 -->
<div class="h" style="top:712px">水中</div><div class="s" style="top:716px">すべてを表示 (21)</div>
<div class="th" style="left:825px;top:761px"><svg viewBox="0 0 120 142"><use filter="url(#bf)" href="#jelly"/><use href="#badge"/></svg></div>
<div class="th" style="left:957px;top:761px"><svg viewBox="0 0 120 142"><use filter="url(#bf)" href="#dolphin"/><use href="#badge"/></svg></div>
<div class="th" style="left:1089px;top:761px"><svg viewBox="0 0 120 142"><use filter="url(#bf)" href="#kelp"/><use href="#badge"/></svg></div>
<div class="th" style="left:1221px;top:761px"><svg viewBox="0 0 120 142"><use filter="url(#bf)" href="#tahiti"/><use href="#badge"/></svg></div>
<div class="sl" style="top:761px;background:linear-gradient(#1d5090,#123a78 55%,#0e2c58)"></div>
<div class="c" style="left:885px;top:913px">アラスカのクラゲ</div><div class="c" style="left:885px;top:939px">(ライト) <span class="d">↓</span></div>
<div class="c" style="left:1017px;top:913px">カリフォルニアのイルカ</div><div class="c" style="left:1017px;top:939px">の群れ <span class="d">↓</span></div>
<div class="c" style="left:1149px;top:913px">カリフォルニアのケルプ</div><div class="c" style="left:1149px;top:939px">の森 <span class="d">↓</span></div>
<div class="c" style="left:1281px;top:913px">タヒチ沿岸部 <span class="d">↓</span></div>

<!-- section 3 -->
<div class="h" style="top:1000px">地球</div><div class="s" style="top:1004px">すべてを表示 (22)</div>
<div class="th" style="left:825px;top:1049px"><svg viewBox="0 0 120 142"><use filter="url(#bf)" href="#mideast"/><use href="#badge"/></svg></div>
<div class="th" style="left:957px;top:1049px"><svg viewBox="0 0 120 142"><use filter="url(#bf)" href="#africa"/><use href="#badge"/></svg></div>
<div class="th" style="left:1089px;top:1049px"><svg viewBox="0 0 120 142"><use filter="url(#bf)" href="#carib"/><use href="#badge"/></svg></div>
<div class="th" style="left:1221px;top:1049px"><svg viewBox="0 0 120 142"><use filter="url(#bf)" href="#aurora"/><use href="#badge"/></svg></div>
<div class="sl" style="top:1049px;background:linear-gradient(#000 52%,#7090c0 60%,#c8ccc8 85%,#aab0a0)"></div>
<div class="c" style="left:885px;top:1201px">中近東 <span class="d">↓</span></div>
<div class="c" style="left:1017px;top:1201px">北アフリカ <span class="d">↓</span></div>
<div class="c" style="left:1149px;top:1201px">カリブ <span class="d">↓</span></div>
<div class="c" style="left:1281px;top:1201px">南極のオーロラ <span class="d">↓</span></div>

<!-- section 4 -->
<div class="h" style="top:1288px">空撮をシャッフル</div><div class="s" style="top:1292px">すべてを表示 (5)</div>
<div class="th" style="left:825px;top:1337px"><svg viewBox="0 0 120 142"><g filter="url(#bf)"><use href="#hills" transform="scale(.5)"/><use href="#ny" transform="translate(60 0) scale(.5)"/><use href="#earth" transform="translate(0 71) scale(.5)"/><use href="#jyel" transform="translate(60 71) scale(.5)"/></g><use href="#rf"/><use href="#badge"/></svg></div>
<div class="th" style="left:957px;top:1337px"><svg viewBox="0 0 120 142"><use href="#hills" transform="scale(.5)"/><rect x="60" width="60" height="71" fill="url(#val)"/><rect y="71" width="60" height="71" fill="url(#fog)"/><rect x="60" y="71" width="60" height="71" fill="url(#riv)"/><use href="#rf"/><use href="#badge"/></svg></div>
<div class="th" style="left:1089px;top:1337px"><svg viewBox="0 0 120 142"><use href="#ny" transform="scale(.5)"/><rect x="60" width="60" height="71" fill="url(#nyc)"/><rect y="71" width="60" height="71" fill="url(#dus)"/><use href="#night" transform="translate(60 71) scale(.5)"/><use href="#rf"/><use href="#badge"/></svg></div>
<div class="th" style="left:1221px;top:1337px"><svg viewBox="0 0 120 142"><g filter="url(#bf)"><use href="#jyel" transform="scale(.5)"/><use href="#jgol" transform="translate(60 0) scale(.5)"/><use href="#wave" transform="translate(0 71) scale(.5)"/><use href="#jblu" transform="translate(60 71) scale(.5)"/></g><use href="#rf"/><use href="#badge"/></svg></div>
<div class="sl" style="top:1337px;background:linear-gradient(#0a0a14 12%,#5a74b0 14%,#c0c8e0 35%,#5a74b0 49%,#181410 50%,#2a241c)"></div>
<div class="c" style="left:885px;top:1489px">すべてをシャッフル</div>
<div class="c" style="left:1017px;top:1489px">風景をシャッフル</div>
<div class="c" style="left:1149px;top:1489px">街並みをシャッフル</div>
<div class="c" style="left:1281px;top:1489px">水中をシャッフル <span class="d">↓</span></div>

<!-- section 5 -->
<div class="h" style="top:1576px">ピクチャ</div><div class="s" style="top:1580px">すべてを表示 (33)</div>
<div class="th" style="left:825px;top:1625px"><svg viewBox="0 0 120 142"><use href="#mint"/></svg></div>
<div class="th" style="left:957px;top:1625px"><svg viewBox="0 0 120 142"><use href="#yel"/></svg></div>
<div class="th" style="left:1089px;top:1625px"><svg viewBox="0 0 120 142"><use href="#ora"/></svg></div>
<div class="th" style="left:1221px;top:1625px"><svg viewBox="0 0 120 142"><use href="#pin"/></svg></div>
<div class="sl" style="top:1625px;background:linear-gradient(#d4ccf4,#7c70c8 35%,#dcd4f8 60%,#e0daf8)"></div>
<div class="c" style="left:885px;top:1776px">ハローメタリック</div><div class="c" style="left:885px;top:1802px">グリーン</div>
<div class="c" style="left:1017px;top:1776px">ハローメタリック</div><div class="c" style="left:1017px;top:1802px">イエロー</div>
<div class="c" style="left:1149px;top:1776px">ハローメタリック</div><div class="c" style="left:1149px;top:1802px">オレンジ</div>
<div class="c" style="left:1281px;top:1776px">ハローメタリックピンク</div>

<!-- section 6 -->
<div class="h" style="top:1864px">カラー</div><div class="s" style="top:1868px">すべてを表示 (19)</div>
<div class="dot" style="left:840px;background:#3c3c3c"></div>
<div class="dot" style="left:905px;background:#3c3c3c"></div>
<div class="dot" style="left:968px;top:1915px;width:32px;height:34px;background:#000;box-sizing:border-box;border:4px solid #5a5a5a"></div>
<div class="dot" style="left:1037px;background:#5a6cb0"></div>
<div class="dot" style="left:1103px;background:#43a4cf"></div>
<div class="dot" style="left:1169px;background:#c8687a"></div>
<div class="dot" style="left:1234px;background:#2f45c0"></div>
<div class="dot" style="left:1300px;background:#f0d5c0"></div>
</div>
</body></html>
